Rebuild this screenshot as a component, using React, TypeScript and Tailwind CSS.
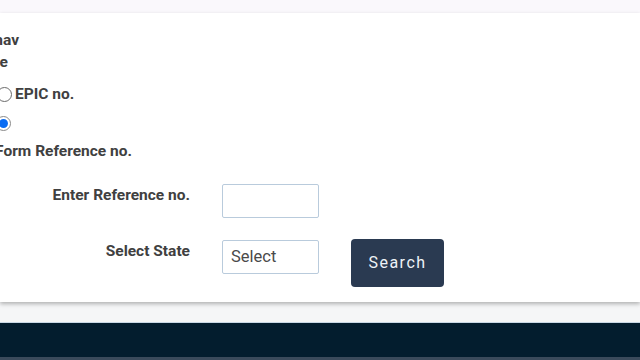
import { useState } from 'react';

function Radio({ checked }: { checked: boolean }) {
  return checked ? (
    <span className="inline-flex w-[15px] h-[15px] rounded-full border border-[#8a8a8a] bg-white items-center justify-center">
      <span className="w-[9px] h-[9px] rounded-full bg-[#0a6cf2]" />
    </span>
  ) : (
    <span className="inline-block w-[15px] h-[15px] rounded-full border border-[#6b6b6b] bg-white" />
  );
}

export default function App() {
  const [mode, setMode] = useState<'epic' | 'form'>('form');

  return (
    <div
      className="w-[640px] h-[360px] overflow-hidden flex flex-col bg-[#f5f6f7] text-[#404040]"
      style={{ fontFamily: 'Roboto, "Liberation Sans", sans-serif' }}
    >
      <div className="h-[13px] bg-[#faf8fc] shrink-0" />

      <div className="h-[289px] shrink-0 bg-white shadow-[0_2px_4px_rgba(0,0,0,0.28)] relative z-10 pt-[17px]">
        <div className="flex flex-col font-bold text-[15.5px] leading-[20px]">
          <div className="w-[19px] flex justify-end whitespace-nowrap">Chunav</div>
          <div className="w-[8px] flex justify-end whitespace-nowrap mt-[2px]">Type</div>

          <label className="flex items-center mt-[12px] ml-[-3px] h-[20px] cursor-pointer" onClick={() => setMode('epic')}>
            <Radio checked={mode === 'epic'} />
            <span className="ml-[3px]">EPIC no.</span>
          </label>

          <label className="flex items-center mt-[9px] ml-[-4px] h-[20px] cursor-pointer" onClick={() => setMode('form')}>
            <Radio checked={mode === 'form'} />
          </label>

          <div className="w-[132px] flex justify-end whitespace-nowrap mt-[8px]">Form Reference no.</div>
        </div>

        <div className="mt-[23px] flex flex-col gap-[22px]">
          <div className="flex items-start">
            <div className="w-[190px] text-right font-bold text-[15.5px] leading-[20px] pt-[1px]">Enter Reference no.</div>
            <input
              className="ml-[32px] w-[97px] h-[34px] border border-[#b9cbdc] rounded-[2px] outline-none px-2 text-[16px]"
              type="text"
            />
          </div>
          <div className="flex items-start">
            <div className="w-[190px] text-right font-bold text-[15.5px] leading-[20px] pt-[1px]">Select State</div>
            <div className="ml-[32px] w-[97px] h-[34px] border border-[#b9cbdc] rounded-[2px] flex items-center pl-[8px] text-[16.5px] text-[#4a4a4a]">
              Select
            </div>
            <button className="ml-[32px] mt-[-1px] w-[93px] h-[48px] rounded-[4px] bg-[#2a3a51] text-[#eef2f7] text-[16px] tracking-[1.5px] font-normal">
              Search
            </button>
          </div>
        </div>
      </div>

      <div className="h-[20px] shrink-0" />
      <div className="h-[35px] shrink-0 bg-[#031d2e] border-t border-[#cad9e5]" />
      <div className="flex-1 bg-[#3a4a5b]" />
    </div>
  );
}
